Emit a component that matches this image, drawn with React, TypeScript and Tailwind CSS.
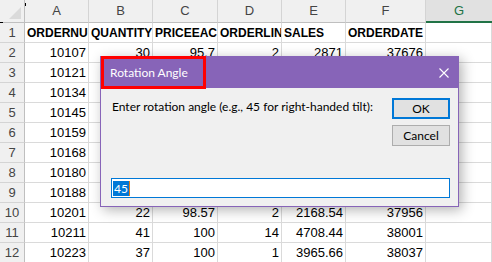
import React from "react";

const cols = ["A", "B", "C", "D", "E", "F", "G"];
const header = ["ORDERNUMBER", "QUANTITYORDERED", "PRICEEACH", "ORDERLINENUMBER", "SALES", "ORDERDATE", ""];
const data: string[][] = [
  ["10107", "30", "95.7", "2", "2871", "37676", ""],
  ["10121", "34", "81.35", "5", "2765.9", "37748", ""],
  ["10134", "41", "94.74", "2", "3884.34", "37803", ""],
  ["10145", "45", "83.26", "6", "3746.7", "37858", ""],
  ["10159", "49", "100", "14", "5205.27", "37904", ""],
  ["10168", "36", "96.66", "1", "3479.76", "37922", ""],
  ["10180", "29", "86.13", "9", "2497.77", "37935", ""],
  ["10188", "48", "100", "1", "5512.32", "37946", ""],
  ["10201", "22", "98.57", "2", "2168.54", "37956", ""],
  ["10211", "41", "100", "14", "4708.44", "38001", ""],
  ["10223", "37", "100", "1", "3965.66", "38037", ""],
];

export default function App() {
  return (
    <div className="relative w-[492px] h-[262px] overflow-hidden bg-white font-['Liberation_Sans',Arial,sans-serif]">
      <div className="grid grid-cols-[25px_64px_64px_65px_64px_64px_80px_66px]">
        {/* corner */}
        <div className="relative h-[23px] bg-[#f0f0f0] border-b border-r border-[#bfbfbf]">
          <div className="absolute right-[3px] bottom-[3px] w-0 h-0 border-l-[12px] border-l-transparent border-b-[12px] border-b-[#dadada]" />
        </div>
        {cols.map((c) =>
          c === "G" ? (
            <div
              key={c}
              className="h-[23px] bg-[#e1e1e1] border-b-2 border-[#217346] text-[#217346] text-[13px] flex items-center justify-center"
            >
              {c}
            </div>
          ) : (
            <div
              key={c}
              className="h-[23px] bg-[#f0f0f0] border-b border-r border-b-[#bfbfbf] border-r-[#d4d4d4] text-[#444] text-[13px] flex items-center justify-center"
            >
              {c}
            </div>
          )
        )}
        {/* row 1 */}
        <div className="h-[20px] bg-[#f0f0f0] border-b border-r border-b-[#d4d4d4] border-r-[#bfbfbf] text-[#444] text-[13px] flex items-center justify-center">
          1
        </div>
        {header.map((h, i) => (
          <div
            key={i}
            className="h-[20px] border-b border-r border-[#dadada] text-[12px] font-bold text-black whitespace-nowrap overflow-hidden pl-[2px] leading-[20px]"
          >
            {h}
          </div>
        ))}
        {data.map((r, ri) => (
          <React.Fragment key={ri}>
            <div className="h-[20px] bg-[#f0f0f0] border-b border-r border-b-[#d4d4d4] border-r-[#bfbfbf] text-[#444] text-[13px] flex items-center justify-center">
              {ri + 2}
            </div>
            {r.map((v, ci) => (
              <div
                key={ci}
                className="h-[20px] border-b border-r border-[#dadada] text-[13px] text-black whitespace-nowrap overflow-hidden text-right pr-[2px] leading-[19px]"
              >
                {v}
              </div>
            ))}
          </React.Fragment>
        ))}
      </div>

      {/* tiny marks */}
      <div className="absolute left-[25px] top-[3px] w-px h-[3px] bg-black" />
      <div className="absolute left-0 top-[22px] w-[3px] h-px bg-black" />

      {/* Dialog */}
      <div className="absolute left-[100px] top-[56px] w-[359px] h-[151px] flex flex-col border border-[#8764b8] bg-[#f0f0f0] shadow-[3px_3px_12px_rgba(0,0,0,0.3)] font-['Lato',sans-serif]">
        <div className="relative h-[31px] shrink-0 bg-[#8764b8] flex items-center pl-[9px] pr-[8px] text-white text-[12px]">
          <span>Rotation Angle</span>
          <svg className="ml-auto mr-[1px]" width="10" height="10" viewBox="0 0 10 10">
            <path d="M0.5 0.5 L9.5 9.5 M9.5 0.5 L0.5 9.5" stroke="white" strokeWidth="1.1" fill="none" />
          </svg>
          <div className="absolute left-0 top-[-1px] w-[105px] h-[33px] border-[3px] border-[#ff0000]" />
        </div>
        <div className="flex-1 flex flex-col pt-[10px] pl-[10px] pr-[8px] pb-[8px]">
          <div className="flex">
            <div className="flex-1 text-[12px] text-black pl-[1px] pt-[1px] leading-[16px] whitespace-nowrap">
              Enter rotation angle (e.g., 45 for right-handed tilt):
            </div>
            <div className="flex flex-col gap-[6px] w-[58px]">
              <button className="h-[21px] border-2 border-[#0078d7] bg-[#e1e1e1] text-[12px] text-black leading-none">
                OK
              </button>
              <button className="h-[21px] border border-[#adadad] bg-[#e1e1e1] text-[12px] text-black leading-none">
                Cancel
              </button>
            </div>
          </div>
          <div className="mt-auto h-[20px] w-[339px] border border-[#0078d7] bg-white flex items-center pl-[1px]">
            <span className="bg-[#0078d7] text-white text-[12px] leading-[15px] px-[1px]">45</span>
            <span className="w-px h-[15px] bg-[#e07b1a]" />
          </div>
        </div>
      </div>
    </div>
  );
}
